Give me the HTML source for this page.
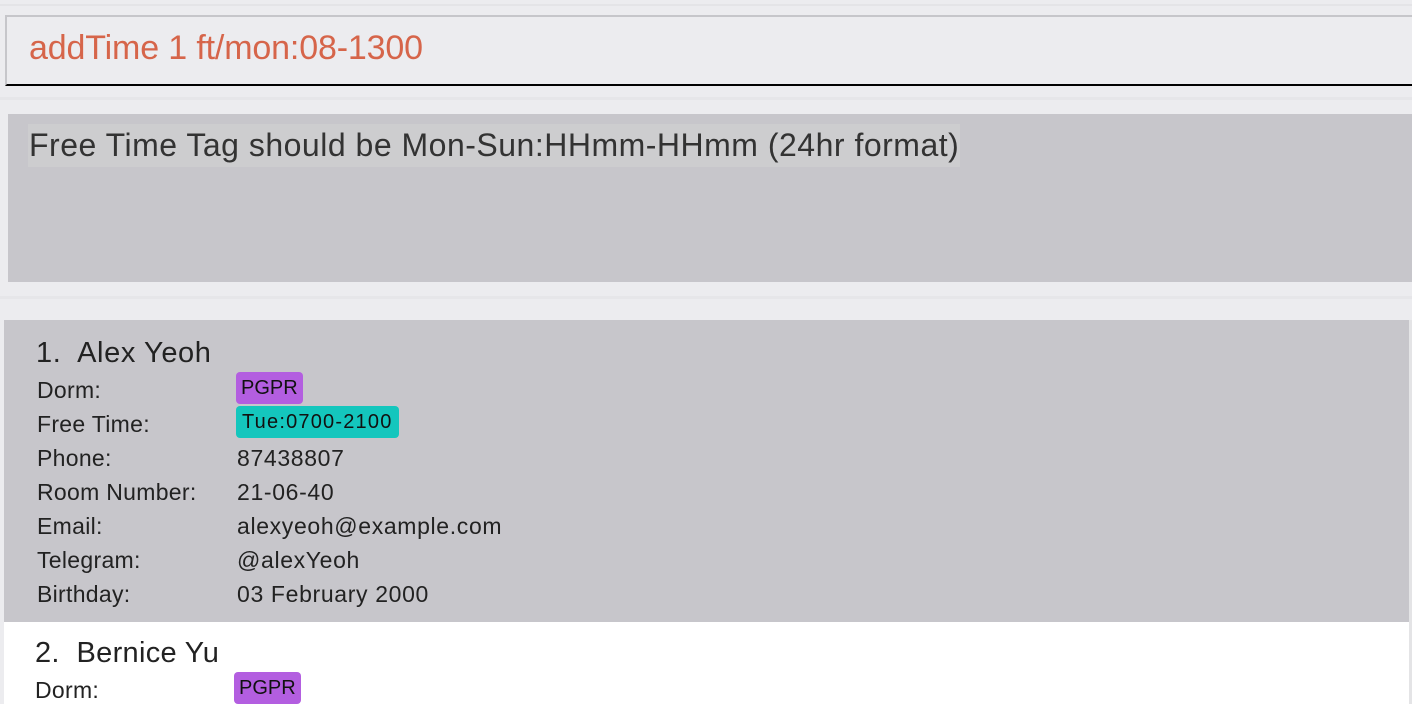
<!DOCTYPE html>
<html><head><style>
body{margin:0;width:1412px;height:704px;background:#ececef;position:relative;overflow:hidden;font-family:"Liberation Sans",sans-serif;}
.a{position:absolute;white-space:nowrap}
.cmd{left:5px;top:15px;width:1407px;height:71px;border-top:2px solid #c6c6ca;border-left:2px solid #c6c6ca;border-bottom:2px solid #000;background:#ececef;box-sizing:border-box}
.res{left:8px;top:114px;width:1404px;height:168px;background:#c7c6cb}
.card{left:4px;top:320px;width:1405px;height:302px;background:#c7c6cb}
.card2{left:4px;top:622px;width:1405px;height:82px;background:#fff}
.lbl{font-size:23px;color:#222;left:37px;letter-spacing:0.3px}
.val{font-size:23px;color:#222;left:237px;letter-spacing:0.65px}
.tag{font-size:20px;color:#111;border-radius:4px;padding:0 6px;height:32px;line-height:32px;letter-spacing:1.2px}
.p{letter-spacing:0;padding:0 5px}
</style></head><body>
<div class="a" style="left:0;top:4px;width:1412px;height:2px;background:#e4e4e7"></div>
<div class="a cmd"></div>
<div class="a" style="left:29px;top:29px;font-size:34px;color:#d6654a;letter-spacing:-0.15px">addTime 1 ft/mon:08-1300</div>
<div class="a" style="left:0;top:97px;width:1412px;height:3px;background:#e6e6e9"></div>
<div class="a res"></div>
<div class="a" style="left:28px;top:124px;width:932px;height:43px;background:#cdcdcf"></div>
<div class="a" style="left:29px;top:127px;font-size:32px;color:#333;letter-spacing:0.5px">Free Time Tag should be Mon-Sun:HHmm-HHmm (24hr format)</div>
<div class="a" style="left:0;top:296px;width:1412px;height:3px;background:#e6e6e9"></div>
<div class="a card"></div>
<div class="a card2"></div>
<div class="a" style="left:1409px;top:320px;width:3px;height:384px;background:#e4e4e6"></div>
<div class="a" style="left:36px;top:337px;font-size:29px;color:#222;letter-spacing:0.6px">1.&nbsp; Alex Yeoh</div>
<div class="a lbl" style="top:377px">Dorm:</div>
<div class="a tag p" style="left:236px;top:372px;background:#b35ee0">PGPR</div>
<div class="a lbl" style="top:411px">Free Time:</div>
<div class="a tag" style="left:236px;top:406px;background:#14c6bd">Tue:0700-2100</div>
<div class="a lbl" style="top:445px">Phone:</div><div class="a val" style="top:445px">87438807</div>
<div class="a lbl" style="top:479px">Room Number:</div><div class="a val" style="top:479px">21-06-40</div>
<div class="a lbl" style="top:513px">Email:</div><div class="a val" style="top:513px">alexyeoh@example.com</div>
<div class="a lbl" style="top:547px">Telegram:</div><div class="a val" style="top:547px">@alexYeoh</div>
<div class="a lbl" style="top:581px">Birthday:</div><div class="a val" style="top:581px">03 February 2000</div>
<div class="a" style="left:35px;top:637px;font-size:29px;color:#222;letter-spacing:0.3px">2.&nbsp; Bernice Yu</div>
<div class="a lbl" style="left:35px;top:677px">Dorm:</div>
<div class="a tag p" style="left:234px;top:672px;background:#b35ee0">PGPR</div>
</body></html>
